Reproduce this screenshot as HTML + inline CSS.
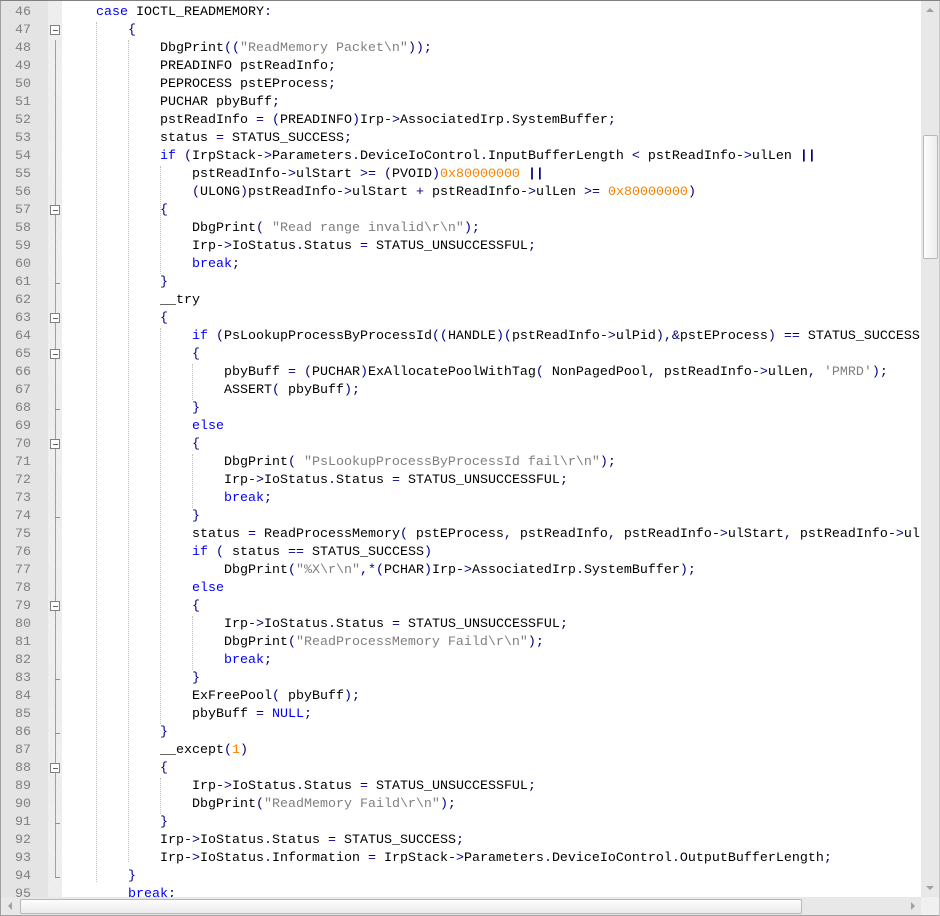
<!DOCTYPE html>
<html><head><style>
*{margin:0;padding:0}
body{width:940px;height:916px;overflow:hidden;background:#fff;position:relative;font-family:"Liberation Mono",monospace;}
#frame{position:absolute;left:0;top:0;width:938px;height:914px;border:1px solid #a0a0a0;border-right:1px solid #c8c8c8;}
#num{position:absolute;left:1px;top:1px;width:47px;height:896px;background:#e4e4e4;}
#fold{position:absolute;left:48px;top:1px;width:14px;height:896px;background-color:#f4f4f4;background-image:repeating-linear-gradient(45deg,#e8e8e8 0 1px,transparent 1px 2px);}
#code{position:absolute;left:0;top:0;width:921px;height:897px;overflow:hidden}
.ln{position:absolute;left:1px;width:30px;text-align:right;color:#808080;font-size:13.33px;line-height:18px;height:18px;margin-top:2px}
.cl{position:absolute;left:64px;white-space:pre;font-size:13.33px;line-height:18px;height:18px;color:#000;margin-top:2px}
.k{color:#0000ff}.o{color:#000080}.s{color:#808080}.n{color:#ff8000}
.box{position:absolute;left:50px;width:8px;height:8px;border:1px solid #808080;background:#fff}
.box:after{content:"";position:absolute;left:2px;top:4px;width:5px;height:1px;background:#606060}
.tick{position:absolute;left:55px;width:5px;height:1px;background:#909090}
.vl{position:absolute;left:55px;width:1px;background:#a0a0a0}
.g{position:absolute;width:0;border-left:1px dotted #c0c0c0}
#vs{position:absolute;left:921px;top:1px;width:18px;height:896px;background:#e8e8e8}
#vt{position:absolute;left:923px;top:135px;width:13px;height:122px;background:linear-gradient(90deg,#fdfdfd,#ececec);border:1px solid #b8b8b8;border-radius:2px}
#hs{position:absolute;left:1px;top:897px;width:920px;height:18px;background:#e8e8e8}
#ht{position:absolute;left:20px;top:899px;width:780px;height:13px;background:linear-gradient(#fdfdfd,#ececec);border:1px solid #b8b8b8;border-radius:2px}
#corner{position:absolute;left:921px;top:897px;width:18px;height:18px;background:#f0f0f0}
</style></head><body>
<div id="frame"></div>
<div id="num"></div><div id="fold"></div>
<div class="g" style="left:96px;top:22px;height:860px"></div>
<div class="g" style="left:128px;top:40px;height:822px"></div>
<div class="g" style="left:160px;top:166px;height:108px"></div>
<div class="g" style="left:160px;top:328px;height:396px"></div>
<div class="g" style="left:192px;top:364px;height:36px"></div>
<div class="g" style="left:192px;top:454px;height:54px"></div>
<div class="g" style="left:192px;top:616px;height:54px"></div>
<div class="g" style="left:160px;top:778px;height:36px"></div>
<div class="vl" style="top:40px;height:838px"></div>
<div class="box" style="top:25px"></div>
<div class="box" style="top:205px"></div>
<div class="box" style="top:313px"></div>
<div class="box" style="top:349px"></div>
<div class="box" style="top:439px"></div>
<div class="box" style="top:601px"></div>
<div class="box" style="top:763px"></div>
<div class="tick" style="top:283px"></div>
<div class="tick" style="top:409px"></div>
<div class="tick" style="top:517px"></div>
<div class="tick" style="top:679px"></div>
<div class="tick" style="top:733px"></div>
<div class="tick" style="top:823px"></div>
<div class="tick" style="top:877px"></div>
<div id="code">
<div class="ln" style="top:2px">46</div><div class="cl" style="top:2px">    <span class="k">case</span> IOCTL_READMEMORY<span class="o">:</span></div>
<div class="ln" style="top:20px">47</div><div class="cl" style="top:20px">        <span class="o">{</span></div>
<div class="ln" style="top:38px">48</div><div class="cl" style="top:38px">            DbgPrint<span class="o">((</span><span class="s">"ReadMemory Packet\n"</span><span class="o">));</span></div>
<div class="ln" style="top:56px">49</div><div class="cl" style="top:56px">            PREADINFO pstReadInfo<span class="o">;</span></div>
<div class="ln" style="top:74px">50</div><div class="cl" style="top:74px">            PEPROCESS pstEProcess<span class="o">;</span></div>
<div class="ln" style="top:92px">51</div><div class="cl" style="top:92px">            PUCHAR pbyBuff<span class="o">;</span></div>
<div class="ln" style="top:110px">52</div><div class="cl" style="top:110px">            pstReadInfo <span class="o">=</span> <span class="o">(</span>PREADINFO<span class="o">)</span>Irp<span class="o">-&gt;</span>AssociatedIrp<span class="o">.</span>SystemBuffer<span class="o">;</span></div>
<div class="ln" style="top:128px">53</div><div class="cl" style="top:128px">            status <span class="o">=</span> STATUS_SUCCESS<span class="o">;</span></div>
<div class="ln" style="top:146px">54</div><div class="cl" style="top:146px">            <span class="k">if</span> <span class="o">(</span>IrpStack<span class="o">-&gt;</span>Parameters<span class="o">.</span>DeviceIoControl<span class="o">.</span>InputBufferLength <span class="o">&lt;</span> pstReadInfo<span class="o">-&gt;</span>ulLen <span class="o"><b>||</b></span></div>
<div class="ln" style="top:164px">55</div><div class="cl" style="top:164px">                pstReadInfo<span class="o">-&gt;</span>ulStart <span class="o">&gt;=</span> <span class="o">(</span>PVOID<span class="o">)</span><span class="n">0x80000000</span> <span class="o"><b>||</b></span></div>
<div class="ln" style="top:182px">56</div><div class="cl" style="top:182px">                <span class="o">(</span>ULONG<span class="o">)</span>pstReadInfo<span class="o">-&gt;</span>ulStart <span class="o">+</span> pstReadInfo<span class="o">-&gt;</span>ulLen <span class="o">&gt;=</span> <span class="n">0x80000000</span><span class="o">)</span></div>
<div class="ln" style="top:200px">57</div><div class="cl" style="top:200px">            <span class="o">{</span></div>
<div class="ln" style="top:218px">58</div><div class="cl" style="top:218px">                DbgPrint<span class="o">(</span> <span class="s">"Read range invalid\r\n"</span><span class="o">);</span></div>
<div class="ln" style="top:236px">59</div><div class="cl" style="top:236px">                Irp<span class="o">-&gt;</span>IoStatus<span class="o">.</span>Status <span class="o">=</span> STATUS_UNSUCCESSFUL<span class="o">;</span></div>
<div class="ln" style="top:254px">60</div><div class="cl" style="top:254px">                <span class="k">break</span><span class="o">;</span></div>
<div class="ln" style="top:272px">61</div><div class="cl" style="top:272px">            <span class="o">}</span></div>
<div class="ln" style="top:290px">62</div><div class="cl" style="top:290px">            __try</div>
<div class="ln" style="top:308px">63</div><div class="cl" style="top:308px">            <span class="o">{</span></div>
<div class="ln" style="top:326px">64</div><div class="cl" style="top:326px">                <span class="k">if</span> <span class="o">(</span>PsLookupProcessByProcessId<span class="o">((</span>HANDLE<span class="o">)(</span>pstReadInfo<span class="o">-&gt;</span>ulPid<span class="o">),&amp;</span>pstEProcess<span class="o">)</span> <span class="o">==</span> STATUS_SUCCESS<span class="o">)</span></div>
<div class="ln" style="top:344px">65</div><div class="cl" style="top:344px">                <span class="o">{</span></div>
<div class="ln" style="top:362px">66</div><div class="cl" style="top:362px">                    pbyBuff <span class="o">=</span> <span class="o">(</span>PUCHAR<span class="o">)</span>ExAllocatePoolWithTag<span class="o">(</span> NonPagedPool<span class="o">,</span> pstReadInfo<span class="o">-&gt;</span>ulLen<span class="o">,</span> <span class="s">'PMRD'</span><span class="o">);</span></div>
<div class="ln" style="top:380px">67</div><div class="cl" style="top:380px">                    ASSERT<span class="o">(</span> pbyBuff<span class="o">);</span></div>
<div class="ln" style="top:398px">68</div><div class="cl" style="top:398px">                <span class="o">}</span></div>
<div class="ln" style="top:416px">69</div><div class="cl" style="top:416px">                <span class="k">else</span></div>
<div class="ln" style="top:434px">70</div><div class="cl" style="top:434px">                <span class="o">{</span></div>
<div class="ln" style="top:452px">71</div><div class="cl" style="top:452px">                    DbgPrint<span class="o">(</span> <span class="s">"PsLookupProcessByProcessId fail\r\n"</span><span class="o">);</span></div>
<div class="ln" style="top:470px">72</div><div class="cl" style="top:470px">                    Irp<span class="o">-&gt;</span>IoStatus<span class="o">.</span>Status <span class="o">=</span> STATUS_UNSUCCESSFUL<span class="o">;</span></div>
<div class="ln" style="top:488px">73</div><div class="cl" style="top:488px">                    <span class="k">break</span><span class="o">;</span></div>
<div class="ln" style="top:506px">74</div><div class="cl" style="top:506px">                <span class="o">}</span></div>
<div class="ln" style="top:524px">75</div><div class="cl" style="top:524px">                status <span class="o">=</span> ReadProcessMemory<span class="o">(</span> pstEProcess<span class="o">,</span> pstReadInfo<span class="o">,</span> pstReadInfo<span class="o">-&gt;</span>ulStart<span class="o">,</span> pstReadInfo<span class="o">-&gt;</span>ulLen<span class="o">);</span></div>
<div class="ln" style="top:542px">76</div><div class="cl" style="top:542px">                <span class="k">if</span> <span class="o">(</span> status <span class="o">==</span> STATUS_SUCCESS<span class="o">)</span></div>
<div class="ln" style="top:560px">77</div><div class="cl" style="top:560px">                    DbgPrint<span class="o">(</span><span class="s">"%X\r\n"</span><span class="o">,*(</span>PCHAR<span class="o">)</span>Irp<span class="o">-&gt;</span>AssociatedIrp<span class="o">.</span>SystemBuffer<span class="o">);</span></div>
<div class="ln" style="top:578px">78</div><div class="cl" style="top:578px">                <span class="k">else</span></div>
<div class="ln" style="top:596px">79</div><div class="cl" style="top:596px">                <span class="o">{</span></div>
<div class="ln" style="top:614px">80</div><div class="cl" style="top:614px">                    Irp<span class="o">-&gt;</span>IoStatus<span class="o">.</span>Status <span class="o">=</span> STATUS_UNSUCCESSFUL<span class="o">;</span></div>
<div class="ln" style="top:632px">81</div><div class="cl" style="top:632px">                    DbgPrint<span class="o">(</span><span class="s">"ReadProcessMemory Faild\r\n"</span><span class="o">);</span></div>
<div class="ln" style="top:650px">82</div><div class="cl" style="top:650px">                    <span class="k">break</span><span class="o">;</span></div>
<div class="ln" style="top:668px">83</div><div class="cl" style="top:668px">                <span class="o">}</span></div>
<div class="ln" style="top:686px">84</div><div class="cl" style="top:686px">                ExFreePool<span class="o">(</span> pbyBuff<span class="o">);</span></div>
<div class="ln" style="top:704px">85</div><div class="cl" style="top:704px">                pbyBuff <span class="o">=</span> <span class="k">NULL</span><span class="o">;</span></div>
<div class="ln" style="top:722px">86</div><div class="cl" style="top:722px">            <span class="o">}</span></div>
<div class="ln" style="top:740px">87</div><div class="cl" style="top:740px">            __except<span class="o">(</span><span class="n">1</span><span class="o">)</span></div>
<div class="ln" style="top:758px">88</div><div class="cl" style="top:758px">            <span class="o">{</span></div>
<div class="ln" style="top:776px">89</div><div class="cl" style="top:776px">                Irp<span class="o">-&gt;</span>IoStatus<span class="o">.</span>Status <span class="o">=</span> STATUS_UNSUCCESSFUL<span class="o">;</span></div>
<div class="ln" style="top:794px">90</div><div class="cl" style="top:794px">                DbgPrint<span class="o">(</span><span class="s">"ReadMemory Faild\r\n"</span><span class="o">);</span></div>
<div class="ln" style="top:812px">91</div><div class="cl" style="top:812px">            <span class="o">}</span></div>
<div class="ln" style="top:830px">92</div><div class="cl" style="top:830px">            Irp<span class="o">-&gt;</span>IoStatus<span class="o">.</span>Status <span class="o">=</span> STATUS_SUCCESS<span class="o">;</span></div>
<div class="ln" style="top:848px">93</div><div class="cl" style="top:848px">            Irp<span class="o">-&gt;</span>IoStatus<span class="o">.</span>Information <span class="o">=</span> IrpStack<span class="o">-&gt;</span>Parameters<span class="o">.</span>DeviceIoControl<span class="o">.</span>OutputBufferLength<span class="o">;</span></div>
<div class="ln" style="top:866px">94</div><div class="cl" style="top:866px">        <span class="o">}</span></div>
<div class="ln" style="top:884px">95</div><div class="cl" style="top:884px">        <span class="k">break</span><span class="o">;</span></div>
</div>
<div id="vs"></div><div id="vt"></div>
<div style="position:absolute;left:926px;top:8px;width:0;height:0;border-left:4px solid transparent;border-right:4px solid transparent;border-bottom:4px solid #a0a0a0"></div>
<div style="position:absolute;left:926px;top:886px;width:0;height:0;border-left:4px solid transparent;border-right:4px solid transparent;border-top:4px solid #a0a0a0"></div>
<div id="hs"></div><div id="ht"></div>
<div style="position:absolute;left:8px;top:902px;width:0;height:0;border-top:4px solid transparent;border-bottom:4px solid transparent;border-right:4px solid #a0a0a0"></div>
<div style="position:absolute;left:911px;top:902px;width:0;height:0;border-top:4px solid transparent;border-bottom:4px solid transparent;border-left:4px solid #a0a0a0"></div>
<div id="corner"></div>
<div style="position:absolute;left:0;top:0;width:940px;height:1px;background:#808080"></div>
</body></html>
